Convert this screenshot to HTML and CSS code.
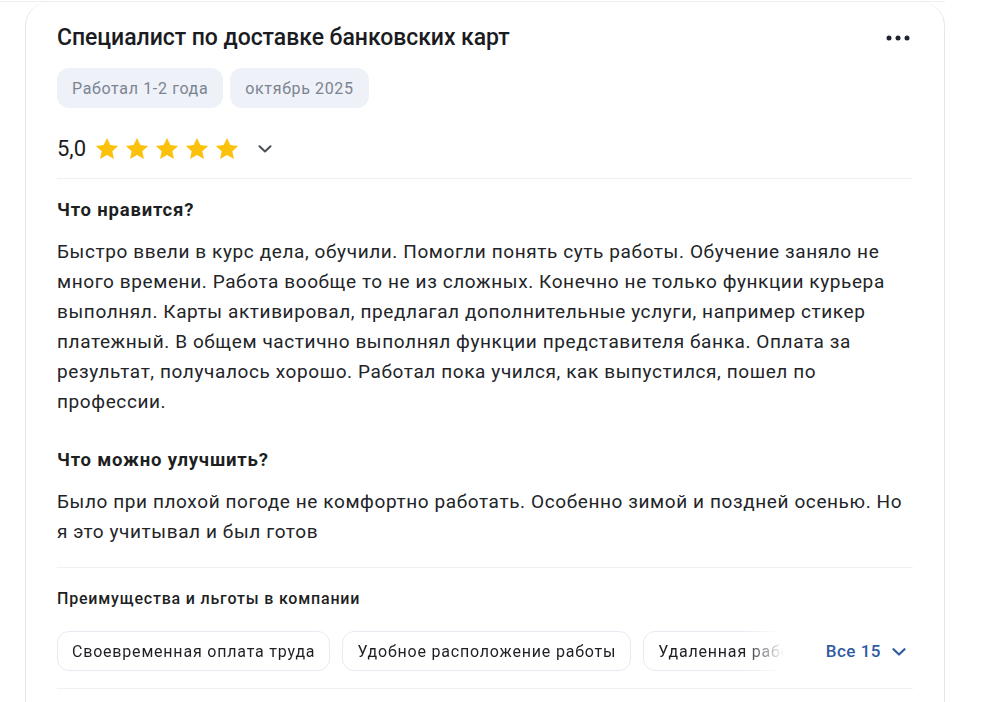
FILE: index.html
```html
<!DOCTYPE html>
<html lang="ru">
<head>
<meta charset="utf-8">
<link rel="stylesheet" href="styles.css">
</head>
<body>
<div class="page">
  <div class="card">
    <div class="head">
      <h2 class="title">Специалист по доставке банковских карт</h2>
      <button class="more" aria-label="Ещё">
        <svg width="24" height="6" viewBox="0 0 24 6"><circle cx="3" cy="3" r="2.5"/><circle cx="12" cy="3" r="2.5"/><circle cx="21" cy="3" r="2.5"/></svg>
      </button>
    </div>
    <div class="tags">
      <span class="tag">Работал 1-2 года</span>
      <span class="tag">октябрь 2025</span>
    </div>
    <div class="rating">
      <span class="score">5,0</span>
      <span class="stars">
        <svg class="star" viewBox="0 0 24 24"><path d="M12 1.8l3.1 6.6 7.2.8-5.4 4.9 1.5 7.1L12 17.6l-6.4 3.6 1.5-7.1-5.4-4.9 7.2-.8z"/></svg>
        <svg class="star" viewBox="0 0 24 24"><path d="M12 1.8l3.1 6.6 7.2.8-5.4 4.9 1.5 7.1L12 17.6l-6.4 3.6 1.5-7.1-5.4-4.9 7.2-.8z"/></svg>
        <svg class="star" viewBox="0 0 24 24"><path d="M12 1.8l3.1 6.6 7.2.8-5.4 4.9 1.5 7.1L12 17.6l-6.4 3.6 1.5-7.1-5.4-4.9 7.2-.8z"/></svg>
        <svg class="star" viewBox="0 0 24 24"><path d="M12 1.8l3.1 6.6 7.2.8-5.4 4.9 1.5 7.1L12 17.6l-6.4 3.6 1.5-7.1-5.4-4.9 7.2-.8z"/></svg>
        <svg class="star" viewBox="0 0 24 24"><path d="M12 1.8l3.1 6.6 7.2.8-5.4 4.9 1.5 7.1L12 17.6l-6.4 3.6 1.5-7.1-5.4-4.9 7.2-.8z"/></svg>
      </span>
      <svg class="chev" width="14" height="8" viewBox="0 0 14 8"><path d="M1.5 1.2L7 6.5l5.5-5.3" fill="none" stroke="#4b4f56" stroke-width="2" stroke-linecap="round" stroke-linejoin="round"/></svg>
    </div>
    <div class="section first">
      <h3 class="sec-title">Что нравится?</h3>
      <p class="text">Быстро ввели в курс дела, обучили. Помогли понять суть работы. Обучение заняло не много времени. Работа вообще то не из сложных. Конечно не только функции курьера выполнял. Карты активировал, предлагал дополнительные услуги, например стикер платежный. В общем частично выполнял функции представителя банка. Оплата за результат, получалось хорошо. Работал пока учился, как выпустился, пошел по профессии.</p>
    </div>
    <div class="section">
      <h3 class="sec-title">Что можно улучшить?</h3>
      <p class="text">Было при плохой погоде не комфортно работать. Особенно зимой и поздней осенью. Но я это учитывал и был готов</p>
    </div>
    <div class="benefits">
      <h4 class="ben-title">Преимущества и льготы в компании</h4>
      <div class="ben-row">
        <div class="chips">
          <span class="chip">Своевременная оплата труда</span>
          <span class="chip">Удобное расположение работы</span>
          <span class="chip">Удаленная работа</span>
          <span class="chip">Гибкий график</span>
        </div>
        <button class="all">Все 15
          <svg width="14" height="8" viewBox="0 0 14 8"><path d="M1.5 1.2L7 6.5l5.5-5.3" fill="none" stroke="#2f5b9f" stroke-width="2.2" stroke-linecap="round" stroke-linejoin="round"/></svg>
        </button>
      </div>
    </div>
  </div>
</div>
</body>
</html>
```

FILE: styles.css
```css
* { box-sizing: border-box; }
html, body { margin: 0; padding: 0; background: #fff; }
body {
  font-family: Roboto, "Noto Sans", "Liberation Sans", sans-serif;
  color: #1d1f23;
  overflow: hidden;
}
.page {
  width: 945px;
  padding-left: 25px;
  margin-top: 1px;
  border-top: 1px solid #eceef2;
}
.card {
  width: 920px;
  border: 1px solid #e3e7ee;
  border-top: 0;
  border-radius: 24px 24px 0 0;
  padding: 22px 31px 60px 31px;
  background: #fff;
}
.head {
  display: flex;
  align-items: center;
  justify-content: space-between;
  height: 28px;
}
.title {
  margin: 0;
  font-size: 23px;
  line-height: 28px;
  font-weight: 500;
  color: #1b1c1f;
  letter-spacing: -0.05px;
}
.more {
  border: 0;
  background: none;
  padding: 0;
  margin-right: 3px;
  display: flex;
  fill: #1f2530;
}
.tags {
  display: flex;
  gap: 7px;
  margin-top: 16px;
}
.tag {
  height: 40px;
  padding: 0 15px;
  display: inline-flex;
  align-items: center;
  background: #eef1f7;
  border-radius: 12px;
  font-size: 16px;
  letter-spacing: 0.65px;
  color: #7b8493;
}
.rating {
  display: flex;
  align-items: center;
  height: 40px;
  margin-top: 21px;
}
.score {
  font-size: 22px;
  line-height: 28px;
  color: #1b1c1f;
  margin-right: 8px;
}
.stars { display: flex; gap: 4px; }
.star { width: 26px; height: 26px; fill: #fcc10a; display: block; }
.chev { margin-left: 18px; display: block; }
.section.first {
  border-top: 1px solid #eef0f4;
  margin-top: 9px;
  padding-top: 19px;
}
.section + .section { margin-top: 31px; }
.sec-title {
  margin: 0;
  font-size: 18.5px;
  line-height: 24px;
  font-weight: 700;
  letter-spacing: 0.8px;
  color: #1d1f23;
}
.text {
  margin: 15px 0 0;
  font-size: 19px;
  line-height: 30px;
  letter-spacing: 0.6px;
  color: #222428;
}
.benefits {
  margin-top: 20px;
  border-top: 1px solid #eef0f4;
  border-bottom: 1px solid #eef0f4;
  padding: 19px 0 17px;
}
.ben-title {
  margin: 0;
  font-size: 16px;
  line-height: 24px;
  font-weight: 500;
  letter-spacing: 0.8px;
  color: #1d1f23;
}
.ben-row {
  display: flex;
  align-items: center;
  margin-top: 20px;
}
.chips {
  flex: 1;
  min-width: 0;
  display: flex;
  gap: 12px;
  overflow: hidden;
  margin-right: 32px;
  -webkit-mask-image: linear-gradient(to right, #000 calc(100% - 50px), transparent calc(100% - 10px));
  mask-image: linear-gradient(to right, #000 calc(100% - 50px), transparent calc(100% - 10px));
}
.chip {
  flex-shrink: 0;
  height: 40px;
  padding: 0 14px;
  display: inline-flex;
  align-items: center;
  border: 1px solid #e7eaf1;
  border-radius: 12px;
  font-size: 16px;
  letter-spacing: 0.8px;
  color: #1d1f23;
  white-space: nowrap;
}
.all {
  border: 0;
  background: none;
  font-family: inherit;
  font-size: 17px;
  font-weight: 500;
  letter-spacing: 0.5px;
  color: #2f5b9f;
  display: flex;
  align-items: center;
  gap: 11px;
  padding: 0 7px 0 0;
}
.all svg { display: block; margin-top: 1px; }
```
